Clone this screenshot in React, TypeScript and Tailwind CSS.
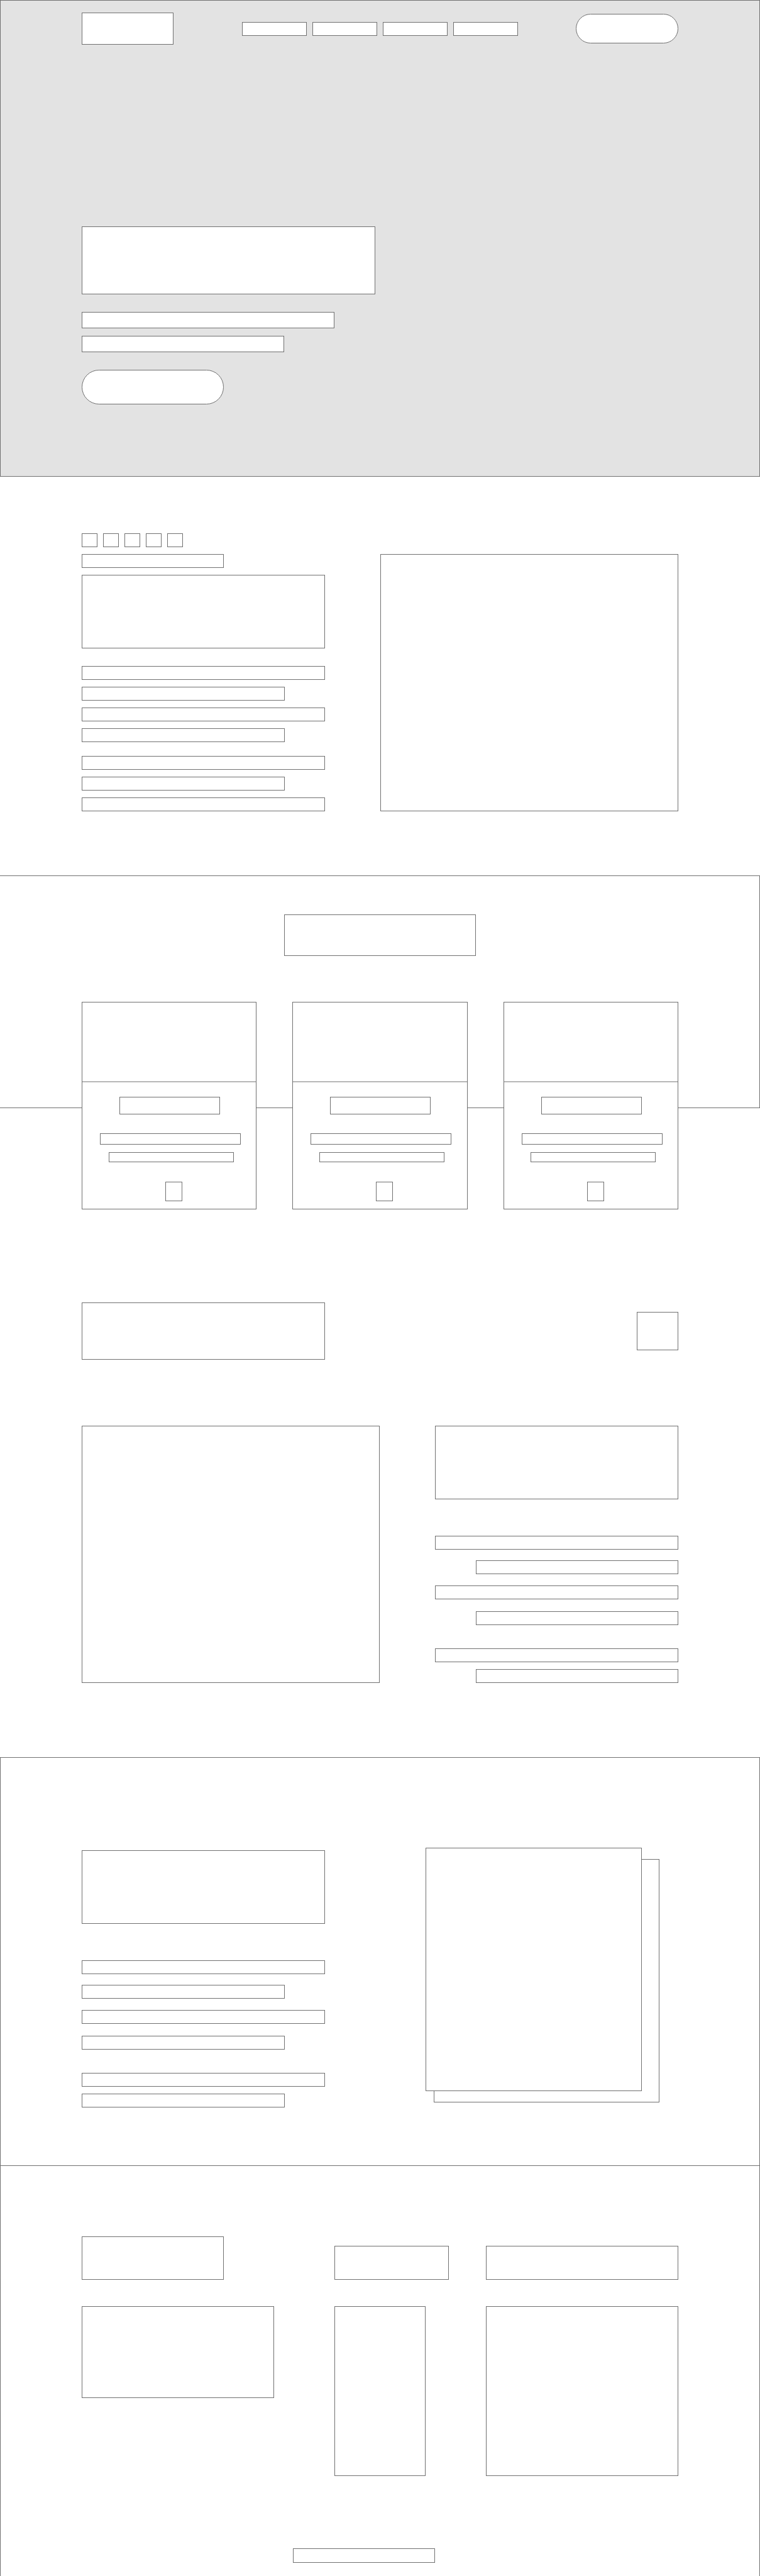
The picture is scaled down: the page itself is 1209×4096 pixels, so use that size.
import type { ReactNode } from "react";

const NAV_LINKS = ["home", "about", "services", "contact"];
const RATINGS = [1, 2, 3, 4, 5];
const SERVICES = ["first", "second", "third"];

/* Outlined placeholder block used for every piece of content. */
function Box({ className }: { className: string }) {
  return <div className={`border border-[#707070] bg-white ${className}`} />;
}

/* A heading block followed by two paragraphs of text lines. */
function Article({ alignEnd = false }: { alignEnd?: boolean }) {
  return (
    <div className={`flex flex-col ${alignEnd ? "items-end" : "items-start"}`}>
      <Box className="h-[117px] w-full" />
      <Box className="mt-[58px] h-[22px] w-full" />
      <Box className="mt-[17px] h-[22px] w-5/6" />
      <Box className="mt-[18px] h-[22px] w-full" />
      <Box className="mt-[19px] h-[22px] w-5/6" />
      <Box className="mt-[37px] h-[22px] w-full" />
      <Box className="mt-[11px] h-[22px] w-5/6" />
    </div>
  );
}

function Container({ children, className = "" }: { children: ReactNode; className?: string }) {
  return <div className={`px-[130px] ${className}`}>{children}</div>;
}

function Hero() {
  return (
    <header className="border border-[#707070] bg-[#e3e3e3] px-[129px] pt-[19px] pb-[114px]">
      <div className="flex items-center">
        <a href="#home" aria-label="Logo" className="block h-[51px] w-[146px] border border-[#707070] bg-white" />
        <nav aria-label="Main" className="ml-[109px] flex gap-[9px]">
          {NAV_LINKS.map((name) => (
            <a
              key={name}
              href={`#${name}`}
              aria-label={name}
              className="block h-[22px] w-[103px] border border-[#707070] bg-white"
            />
          ))}
        </nav>
        <button
          type="button"
          aria-label="Sign up"
          className="ml-auto h-[47px] w-[163px] rounded-full border border-[#707070] bg-white"
        />
      </div>
      <Box className="mt-[289px] h-[108px] w-[467px]" />
      <Box className="mt-7 h-[26px] w-[402px]" />
      <Box className="mt-3 h-[26px] w-[322px]" />
      <button
        type="button"
        aria-label="Get started"
        className="mt-7 block h-[55px] w-[226px] rounded-full border border-[#707070] bg-white"
      />
    </header>
  );
}

function About() {
  return (
    <section id="about" className="pt-[90px] pb-[102px]">
      <Container className="grid grid-cols-[387fr_474fr] gap-[88px]">
        <div className="flex flex-col gap-[11px]">
          <div className="flex gap-[9px]">
            {RATINGS.map((n) => (
              <Box key={n} className="h-[22px] w-[25px]" />
            ))}
          </div>
          <Box className="h-[22px] w-[226px]" />
          <Box className="h-[117px] w-full" />
          <div className="mt-[17px] flex flex-col gap-[11px]">
            <Box className="h-[22px] w-full" />
            <Box className="h-[22px] w-5/6" />
            <Box className="h-[22px] w-full" />
            <Box className="h-[22px] w-5/6" />
          </div>
          <div className="mt-[11px] flex flex-col gap-[11px]">
            <Box className="h-[22px] w-full" />
            <Box className="h-[22px] w-5/6" />
            <Box className="h-[22px] w-full" />
          </div>
        </div>
        <Box className="h-[409px] self-end" />
      </Container>
    </section>
  );
}

function ServiceCard({ name }: { name: string }) {
  return (
    <article className="border border-[#707070] bg-white pb-3">
      <div className="h-[127px] border-b-2 border-[#b7b7b7]" />
      <Box className="mt-[23px] ml-[59px] h-7 w-40" />
      <Box className="mt-[30px] ml-7 h-[18px] w-[224px]" />
      <Box className="mt-3 ml-[42px] h-4 w-[199px]" />
      <button
        type="button"
        aria-label={`Open ${name} service`}
        className="mt-[31px] ml-[132px] block h-[31px] w-[27px] border border-[#707070] bg-white"
      />
    </article>
  );
}

function Services() {
  return (
    <section id="services">
      {/* The cards hang over the lower edge of the outlined band. */}
      <div className="h-[370px] border-y border-r border-[#707070] pt-[61px]">
        <Box className="mx-auto h-[66px] w-[305px]" />
      </div>
      <Container className="relative -mt-[169px] grid grid-cols-3 gap-[57px]">
        {SERVICES.map((name) => (
          <ServiceCard key={name} name={name} />
        ))}
      </Container>
    </section>
  );
}

function Feature() {
  return (
    <section className="pt-[148px] pb-[118px]">
      <Container>
        <div className="flex items-center justify-between">
          <Box className="h-[91px] w-[387px]" />
          <button
            type="button"
            aria-label="Next"
            className="h-[61px] w-[66px] border border-[#707070] bg-white"
          />
        </div>
        <div className="mt-[105px] grid grid-cols-[474fr_387fr] gap-[88px]">
          <Box className="h-[409px]" />
          <Article alignEnd />
        </div>
      </Container>
    </section>
  );
}

function Gallery() {
  return (
    <section className="border-x border-t border-[#707070] px-[129px] pt-[143px] pb-[92px]">
      <div className="flex items-start justify-between">
        <div className="w-[387px] pt-1">
          <Article />
        </div>
        <div className="mr-[30px] grid h-[405px] w-[372px]">
          <Box className="col-start-1 row-start-1 h-[387px] w-[359px] self-end justify-self-end" />
          <Box className="col-start-1 row-start-1 h-[387px] w-[344px]" />
        </div>
      </div>
    </section>
  );
}

function Footer() {
  return (
    <footer className="border-x border-t border-[#707070] px-[129px] pt-28 pb-[21px]">
      <div className="grid grid-cols-[402fr_241fr_306fr] items-end">
        <Box className="h-[69px] w-[226px]" />
        <Box className="h-[54px] w-[182px]" />
        <Box className="h-[54px] w-full" />
      </div>
      <div className="mt-[42px] grid grid-cols-[402fr_241fr_306fr] items-start">
        <Box className="h-[146px] w-[306px]" />
        <Box className="h-[270px] w-[145px]" />
        <Box className="h-[270px] w-full" />
      </div>
      <Box className="mt-[115px] ml-[336px] h-[23px] w-[226px]" />
    </footer>
  );
}

export default function App() {
  return (
    <div className="bg-white">
      <Hero />
      <main>
        <About />
        <Services />
        <Feature />
        <Gallery />
      </main>
      <Footer />
    </div>
  );
}
